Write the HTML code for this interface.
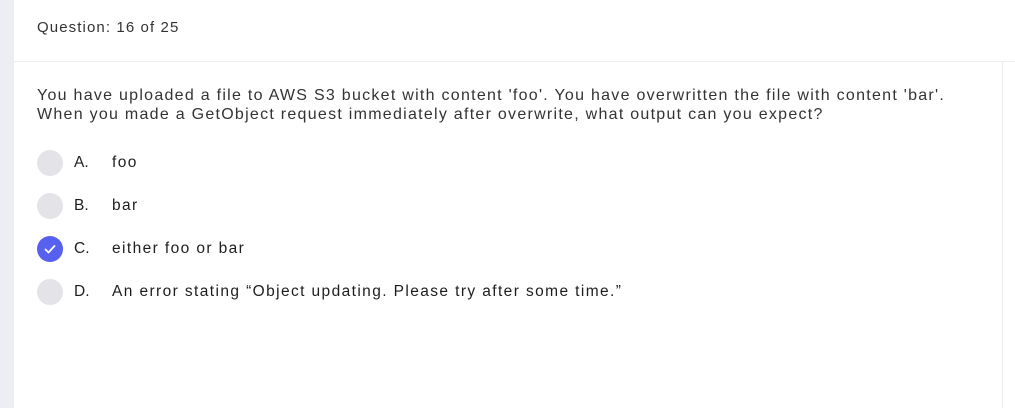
<!DOCTYPE html>
<html><head><style>
html,body{margin:0;padding:0;width:1015px;height:408px;overflow:hidden;background:#fff;font-family:"Liberation Sans",sans-serif;color:#222;}
.strip{position:absolute;left:0;top:0;width:14px;height:408px;background:#eceef4;}
.hdr{position:absolute;left:37px;top:19px;font-size:15px;color:#333;letter-spacing:1.1px;}
.hr{position:absolute;left:14px;top:61px;width:1001px;height:1px;background:#eeeeee;}
.vr{position:absolute;left:1002px;top:61px;width:1px;height:347px;background:#eeeeee;}
.q{position:absolute;left:37px;top:86px;font-size:16px;line-height:19px;color:#333;width:975px;letter-spacing:1.27px;white-space:nowrap;}
.opt{position:absolute;left:37px;height:26px;font-size:15.5px;color:#1e1e1e;}
.c{position:absolute;left:0;top:0;width:26px;height:26px;border-radius:50%;background:#e3e3e8;}
.c.on{background:#5661f0;}
.l{position:absolute;left:37px;top:4px;}
.t{position:absolute;left:75px;top:4px;white-space:nowrap;letter-spacing:1.4px;}
</style></head><body>
<div class="strip"></div>
<div class="hdr">Question: 16 of 25</div>
<div class="hr"></div>
<div class="vr"></div>
<div class="q">You have uploaded a file to AWS S3 bucket with content 'foo'. You have overwritten the file with content 'bar'.<br>When you made a GetObject request immediately after overwrite, what output can you expect?</div>
<div class="opt" style="top:150px"><div class="c"></div><span class="l">A.</span><span class="t">foo</span></div>
<div class="opt" style="top:193px"><div class="c"></div><span class="l">B.</span><span class="t">bar</span></div>
<div class="opt" style="top:236px"><div class="c on"><svg width="26" height="26" viewBox="0 0 26 26"><path d="M8.5 13.5l3 3 6-6.5" stroke="#fff" stroke-width="1.8" fill="none" stroke-linecap="round" stroke-linejoin="round"/></svg></div><span class="l">C.</span><span class="t">either foo or bar</span></div>
<div class="opt" style="top:279px"><div class="c"></div><span class="l">D.</span><span class="t">An error stating “Object updating. Please try after some time.”</span></div>
</body></html>
